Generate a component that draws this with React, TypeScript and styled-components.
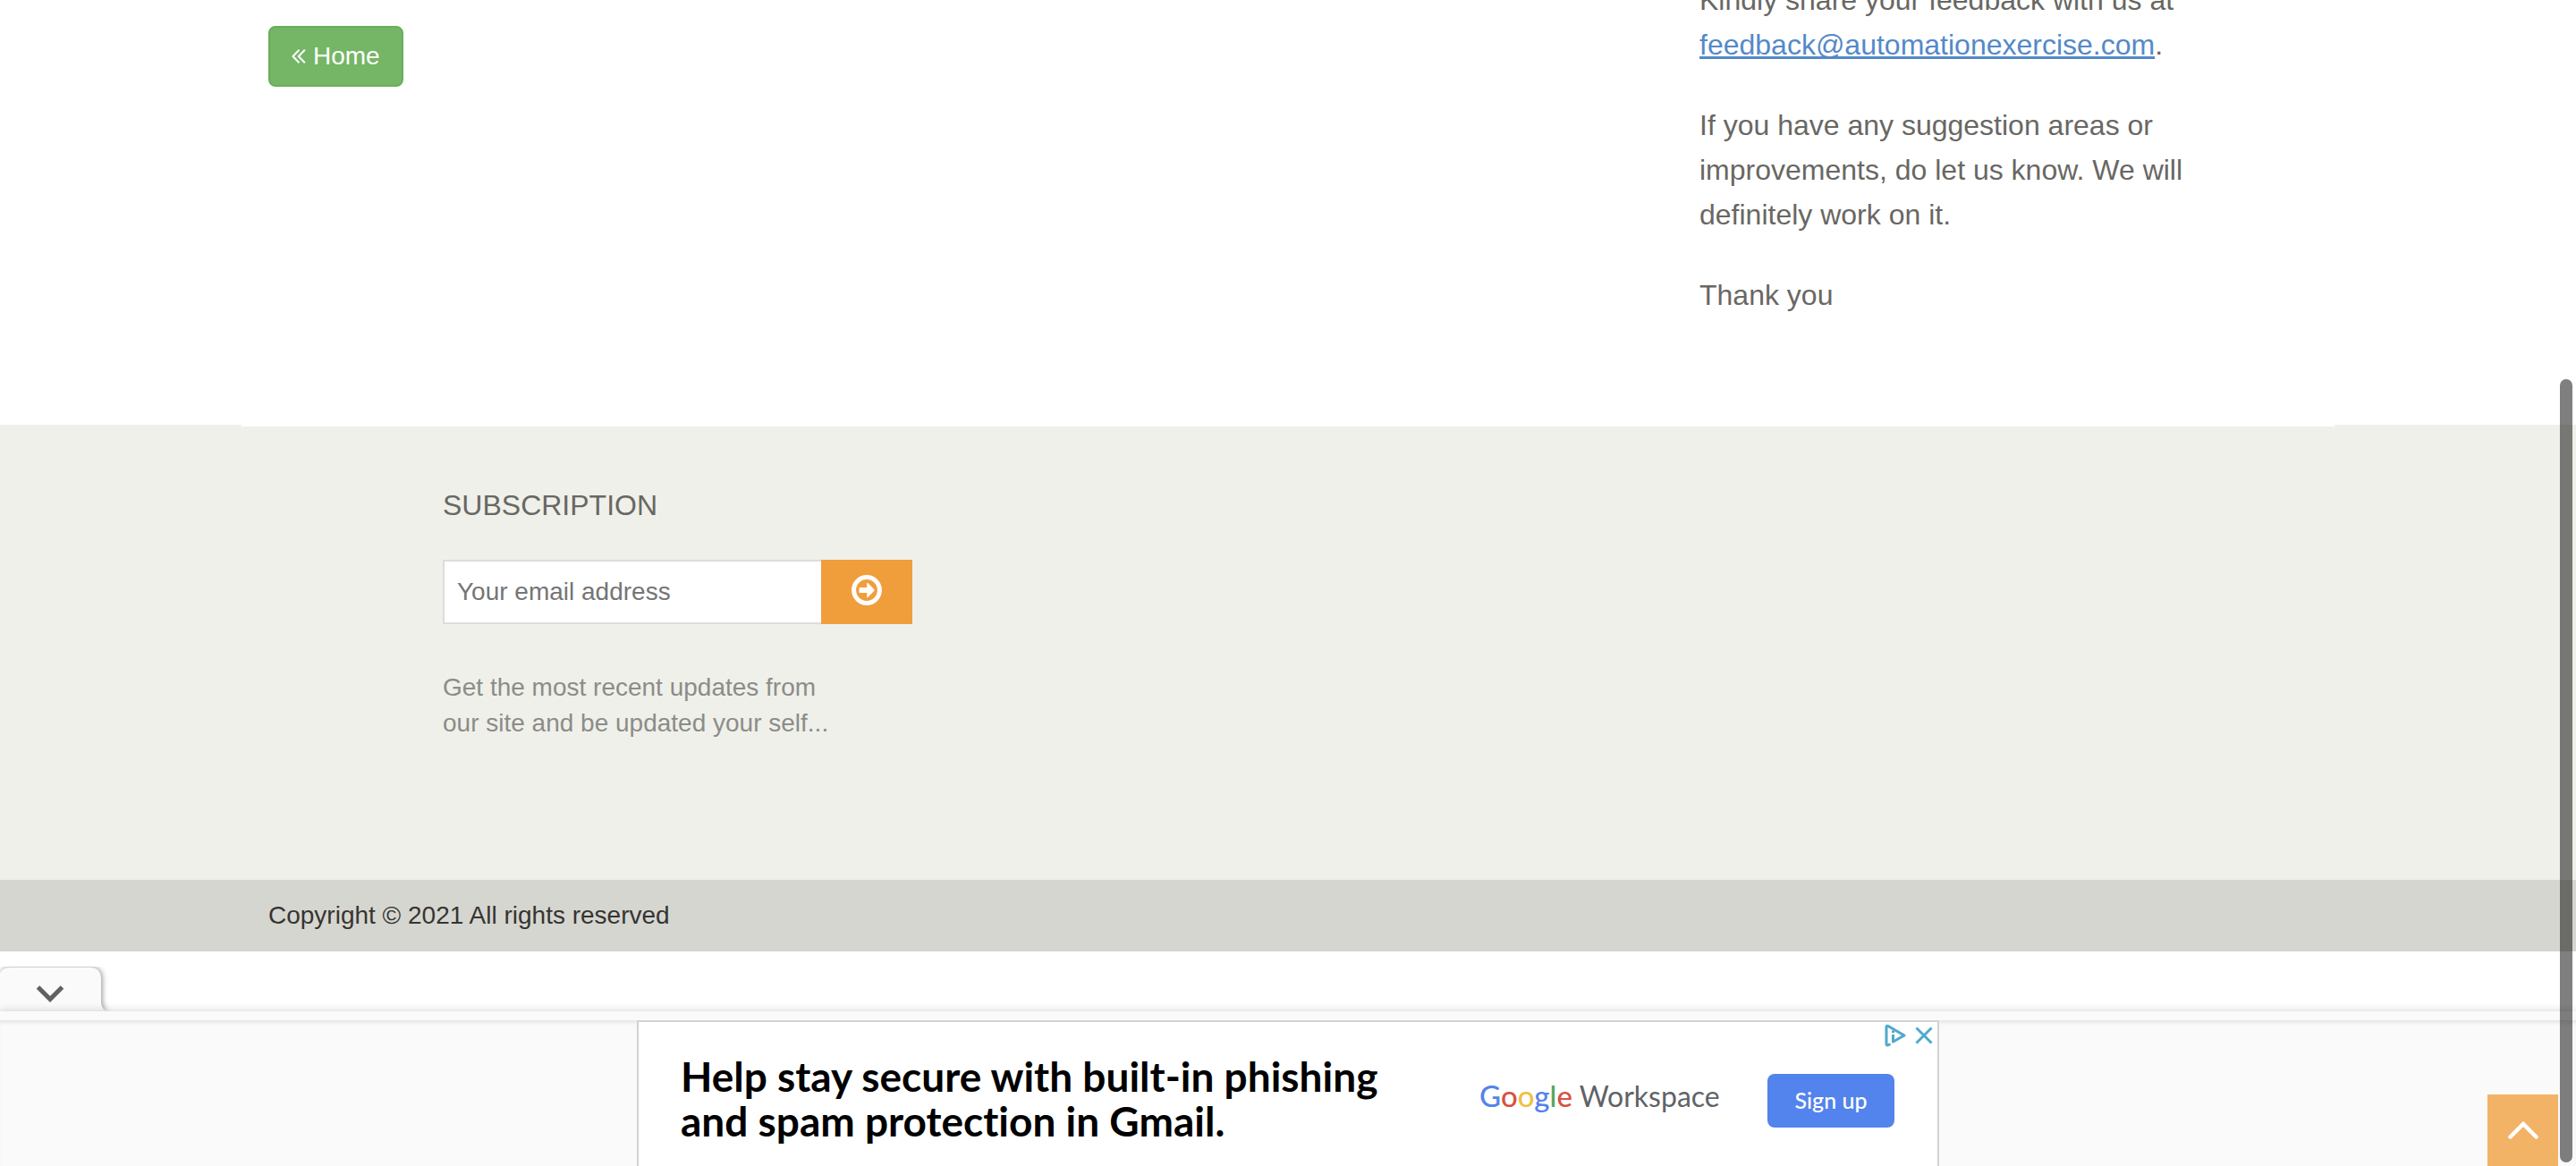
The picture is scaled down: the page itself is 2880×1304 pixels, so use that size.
import React from "react";
import styled, { createGlobalStyle } from "styled-components";

const GlobalStyle = createGlobalStyle`
  *, *::before, *::after { box-sizing: border-box; }
  body {
    margin: 0;
    background: #ffffff;
    color: #696763;
    font-family: "Liberation Sans", Arial, Helvetica, sans-serif;
    font-size: 28px;
    line-height: 40px;
  }
  h2, p { margin: 0; font-weight: 400; }
  button { border: 0; padding: 0; font: inherit; cursor: pointer; }
`;

const Page = styled.div`
  display: flex;
  flex-direction: column;
  height: 100vh;
  overflow: hidden;
`;

const Container = styled.div`
  width: 100%;
  max-width: 2340px;
  margin: 0 auto;
  padding: 0 30px;
`;

/* The page is scrolled, so the first line starts above the window. */
const ContactRow = styled(Container)`
  display: grid;
  grid-template-columns: 2fr 1fr;
  align-items: start;
  margin-top: -25px;
  padding-bottom: 120px;
  flex: none;
`;

const HomeLink = styled.a`
  display: inline-flex;
  align-items: center;
  justify-self: start;
  gap: 8px;
  height: 68px;
  margin-top: 54px;
  padding: 0 24px;
  border: 2px solid #68ae5b;
  border-radius: 8px;
  background: #75b666;
  color: #ffffff;
  text-decoration: none;
`;

const Feedback = styled.section`
  display: flex;
  flex-direction: column;
  gap: 40px;
  padding: 0 60px 0 80px;
  font-size: 32px;
  line-height: 50px;
`;

const MailLink = styled.a`
  color: #5489c8;
  text-decoration: underline;
  text-decoration-thickness: 3px;
  text-underline-offset: 2px;
  text-decoration-skip-ink: none;
`;

const FooterArea = styled.footer`
  flex: none;
  background: #eff0ea;
`;

const FooterNotch = styled.div`
  max-width: 2340px;
  height: 2px;
  margin: 0 auto;
  background: #ffffff;
`;

const Widgets = styled(Container)`
  display: grid;
  grid-template-columns: repeat(12, 1fr);
  padding: 70px 0 155px;
`;

const Subscription = styled.div`
  grid-column: 2 / span 3;
  padding: 0 30px;
`;

const WidgetTitle = styled.h2`
  font-size: 32px;
  line-height: 36px;
  text-transform: uppercase;
`;

const SubscribeForm = styled.form`
  display: flex;
  height: 72px;
  margin: 43px 0 51px;
`;

const EmailInput = styled.input`
  flex: 1;
  min-width: 0;
  padding: 0 14px;
  border: 2px solid #dddddd;
  border-right: 0;
  border-radius: 0;
  background: #ffffff;
  font: inherit;
  outline: 0;
  &::placeholder { color: #757575; opacity: 1; }
`;

const SubscribeButton = styled.button`
  display: grid;
  place-items: center;
  width: 102px;
  padding-bottom: 4px;
  background: #f09e3c;
`;

const Note = styled.p`
  color: #8c8c88;
`;

const CopyrightBar = styled.div`
  padding: 20px 0;
  background: #d6d6d0;
  color: #363432;
`;

const AdDock = styled.aside`
  display: flex;
  flex-direction: column;
  flex: 1;
  min-height: 0;
  margin-top: 17px;
`;

const CollapseButton = styled.button`
  display: block;
  align-self: flex-start;
  height: 50px;
  background: transparent;
  svg { display: block; }
`;

const DockEdge = styled.div`
  flex: none;
  height: 10px;
  background: #fafafa;
  box-shadow: 0 -1px 8px rgba(0, 0, 0, 0.16);
`;

const DockBody = styled.div`
  display: flex;
  justify-content: center;
  flex: 1;
  min-height: 0;
  background: #fafafa;
  box-shadow: inset 0 5px 5px -3px rgba(0, 0, 0, 0.1);
`;

const Banner = styled.div`
  position: relative;
  display: flex;
  align-items: flex-start;
  width: 1456px;
  height: 180px;
  padding: 0 48px 0 47px;
  border: 2px solid #d2d2d2;
  background: #ffffff;
  font-family: Lato, sans-serif;
`;

const Headline = styled.p`
  flex: 1;
  padding-top: 36px;
  color: #000000;
  font-weight: 700;
  font-size: 46px;
  line-height: 50px;
  font-variant-ligatures: none;
`;

const Brand = styled.div`
  width: 322px;
  padding-top: 58px;
  color: #5f6368;
  font-size: 32px;
  line-height: 48px;
  white-space: nowrap;
`;

const Google = styled.span`
  font-size: 33px;
  font-weight: 500;
`;

const Letter = styled.span<{ $color: string }>`
  color: ${(p) => p.$color};
`;

const SignUp = styled.button`
  width: 142px;
  height: 60px;
  margin-top: 58px;
  padding-bottom: 2px;
  border-radius: 8px;
  background: #5383ec;
  color: #ffffff;
  font-family: inherit;
  font-size: 25px;
  font-weight: 500;
`;

const AdControls = styled.div`
  position: absolute;
  top: 2px;
  right: 5px;
  display: flex;
  gap: 10px;
  button { background: transparent; }
  svg { display: block; }
`;

const ToTop = styled.a`
  position: fixed;
  right: 20px;
  bottom: 0;
  display: grid;
  place-items: center;
  width: 79px;
  height: 80px;
  background: #f2b367;
`;

const ScrollThumb = styled.div`
  position: fixed;
  top: 424px;
  right: 4px;
  bottom: 4px;
  width: 14px;
  border-radius: 7px;
  background: rgba(0, 0, 0, 0.5);
`;

const TabShape = styled.path`
  fill: #fafafa;
  filter: drop-shadow(1px 0 3px rgba(0, 0, 0, 0.45));
`;

const googleLetters: [string, string][] = [
  ["G", "#5383ec"],
  ["o", "#d85140"],
  ["o", "#f1bf42"],
  ["g", "#5383ec"],
  ["l", "#58a65c"],
  ["e", "#d85140"],
];

export default function App() {
  return (
    <>
      <GlobalStyle />
      <Page>
        <ContactRow as="main">
          <HomeLink href="#home">
            <svg width="16" height="16" viewBox="0 0 16 16" fill="none" stroke="#fff" strokeWidth="2" aria-hidden="true">
              <path d="M8.5 .8 1.5 8l7 7.2M14.8 .8 7.8 8l7 7.2" />
            </svg>
            Home
          </HomeLink>
          <Feedback>
            <p>
              Kindly share your feedback with us at{" "}
              <MailLink href="mailto:feedback@automationexercise.com">feedback@automationexercise.com</MailLink>.
            </p>
            <p>If you have any suggestion areas or improvements, do let us know. We will definitely work on it.</p>
            <p>Thank you</p>
          </Feedback>
        </ContactRow>

        <FooterArea>
          <FooterNotch />
          <Widgets>
            <Subscription>
              <WidgetTitle>Subscription</WidgetTitle>
              <SubscribeForm onSubmit={(e) => e.preventDefault()}>
                <EmailInput type="email" aria-label="Your email address" placeholder="Your email address" />
                <SubscribeButton type="submit" aria-label="Subscribe">
                  <svg width="34" height="34" viewBox="0 0 34 34" aria-hidden="true">
                    <circle cx="17" cy="17" r="14.4" fill="none" stroke="#fff" strokeWidth="5" />
                    <path d="M8.6 14h8.6V9.6q0-1.4 1.1-.5l7 7.1q.7.8 0 1.6l-7 7.1q-1.1.9-1.1-.5V20H8.6z" fill="#fff" />
                  </svg>
                </SubscribeButton>
              </SubscribeForm>
              <Note>
                Get the most recent updates from
                <br />
                our site and be updated your self...
              </Note>
            </Subscription>
          </Widgets>
          <CopyrightBar>
            <Container>
              <p>Copyright © 2021 All rights reserved</p>
            </Container>
          </CopyrightBar>
        </FooterArea>

        <AdDock aria-label="Advertisement">
          <CollapseButton type="button" aria-label="Hide advertisement">
            <svg width="130" height="50" viewBox="0 0 130 50" aria-hidden="true">
              <TabShape d="M0 7Q3 1 11 1H100Q113 1 113 14V40Q114 50 122 50H0Z" />
              <path d="M42.500 23 56 36.500 69.500 23" fill="none" stroke="#616161" strokeWidth="5" />
            </svg>
          </CollapseButton>
          <DockEdge />
          <DockBody>
            <Banner>
              <Headline>
                Help stay secure with built-in phishing
                <br />
                and spam protection in Gmail.
              </Headline>
              <Brand>
                <Google>
                  {googleLetters.map(([char, color], i) => (
                    <Letter key={i} $color={color}>{char}</Letter>
                  ))}
                </Google>{" "}
                Workspace
              </Brand>
              <SignUp type="button">Sign up</SignUp>
              <AdControls>
                <button type="button" aria-label="Ad choices">
                  <svg width="24" height="26" viewBox="0 0 24 26" fill="none" stroke="#4fa9c9" aria-hidden="true">
                    <path d="M6.500 22.500 3.500 24Q2 24 2 22.500V3.500Q2 1.500 4 2.500L22 13 9.500 20V12" strokeWidth="3" strokeLinejoin="round" />
                    <path d="M9.500 7.500V10" strokeWidth="3" />
                  </svg>
                </button>
                <button type="button" aria-label="Close ad">
                  <svg width="20" height="26" viewBox="0 0 20 26" fill="none" stroke="#4fa9c9" strokeWidth="3" aria-hidden="true">
                    <path d="M1.500 4.500 18.500 21.500M18.500 4.500 1.500 21.500" />
                  </svg>
                </button>
              </AdControls>
            </Banner>
          </DockBody>
        </AdDock>
      </Page>
      <ToTop href="#top" aria-label="Back to top">
        <svg width="34" height="22" viewBox="0 0 34 22" fill="none" stroke="#fff" strokeWidth="4.500" strokeLinecap="round" aria-hidden="true">
          <path d="M2.500 18.500 17 4l14.500 14.500" />
        </svg>
      </ToTop>
      <ScrollThumb />
    </>
  );
}
